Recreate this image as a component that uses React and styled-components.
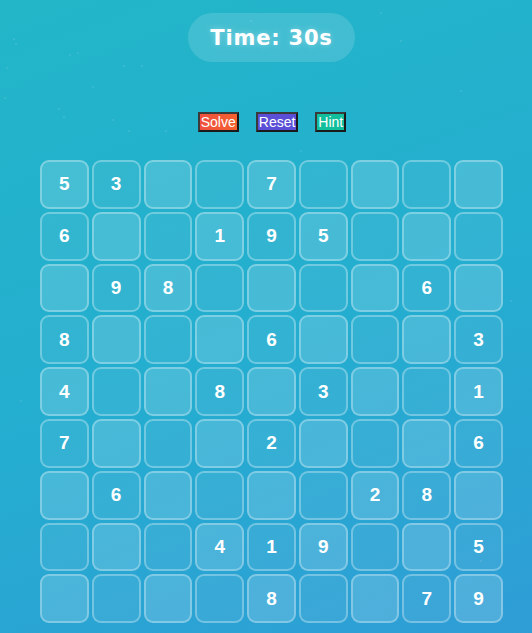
import React from "react";
import styled, { createGlobalStyle } from "styled-components";

const puzzle = [
  [5, 3, 0, 0, 7, 0, 0, 0, 0],
  [6, 0, 0, 1, 9, 5, 0, 0, 0],
  [0, 9, 8, 0, 0, 0, 0, 6, 0],
  [8, 0, 0, 0, 6, 0, 0, 0, 3],
  [4, 0, 0, 8, 0, 3, 0, 0, 1],
  [7, 0, 0, 0, 2, 0, 0, 0, 6],
  [0, 6, 0, 0, 0, 0, 2, 8, 0],
  [0, 0, 0, 4, 1, 9, 0, 0, 5],
  [0, 0, 0, 0, 8, 0, 0, 7, 9],
];

const sparkles = [
  [13, 38], [15, 43], [69, 54], [77, 52], [123, 65], [141, 65], [92, 86], [58, 108],
  [63, 116], [112, 119], [128, 130], [165, 130], [6, 67], [4, 97], [400, 40], [460, 90],
  [300, 150], [510, 300], [20, 400], [480, 560], [250, 20], [380, 12],
];

const GlobalStyle = createGlobalStyle`
  html, body {
    margin: 0;
    padding: 0;
  }
  body {
    font-family: "Liberation Sans", Arial, sans-serif;
  }
`;

const Page = styled.div`
  position: relative;
  width: 532px;
  height: 633px;
  overflow: hidden;
  background: linear-gradient(160deg, #22b6c8 0%, #24add0 55%, #2f9dd6 100%);
  display: flex;
  flex-direction: column;
  align-items: center;
  padding: 13px 0 0 11px;
  box-sizing: border-box;
`;

const Sparkle = styled.span`
  position: absolute;
  width: 2px;
  height: 2px;
  background: rgba(255, 255, 255, 0.09);
`;

const Timer = styled.div`
  height: 49px;
  padding: 0 22px;
  border-radius: 25px;
  background: rgba(255, 255, 255, 0.14);
  display: flex;
  align-items: center;
  color: #fff;
  font-family: "DejaVu Sans", sans-serif;
  font-weight: bold;
  font-size: 21px;
  letter-spacing: 0.8px;
  text-shadow: 0 0 6px rgba(255, 255, 255, 0.35);
`;

const Controls = styled.div`
  display: flex;
  gap: 17px;
  margin-top: 50px;
  padding-left: 1px;
`;

const Button = styled.button`
  font-family: "Liberation Sans", Arial, sans-serif;
  font-size: 14px;
  line-height: 16px;
  color: #fff;
  background: ${(p) => p.$bg};
  border: 2px solid #3a3a3a;
  border-right-color: #1a1a1a;
  border-bottom-color: #1a1a1a;
  padding: 0 1px;
  margin: 0;
  border-radius: 0;
  cursor: pointer;
`;

const Board = styled.div`
  margin-top: 28px;
  width: 463px;
  display: grid;
  grid-template-columns: repeat(9, 1fr);
  gap: 3px;
`;

const Cell = styled.div`
  height: 48.8px;
  box-sizing: border-box;
  border: 2px solid rgba(255, 255, 255, 0.3);
  border-radius: 9px;
  background: ${(p) => (p.$light ? "rgba(255, 255, 255, 0.16)" : "rgba(255, 255, 255, 0.07)")};
  display: flex;
  align-items: center;
  justify-content: center;
  color: #fff;
  font-family: "Liberation Sans", Arial, sans-serif;
  font-weight: bold;
  font-size: 19px;
`;

export default function App() {
  return (
    <Page>
      <GlobalStyle />
      {sparkles.map(([x, y], i) => (
        <Sparkle key={i} style={{ left: x, top: y }} />
      ))}
      <Timer>Time: 30s</Timer>
      <Controls>
        <Button $bg="linear-gradient(90deg, #ee5140, #f5622e)">Solve</Button>
        <Button $bg="#5a4fd6">Reset</Button>
        <Button $bg="#12bf9d">Hint</Button>
      </Controls>
      <Board>
        {puzzle.map((row, r) =>
          row.map((v, c) => (
            <Cell key={`${r}-${c}`} $light={(r + c) % 2 === 0}>
              {v || ""}
            </Cell>
          ))
        )}
      </Board>
    </Page>
  );
}
